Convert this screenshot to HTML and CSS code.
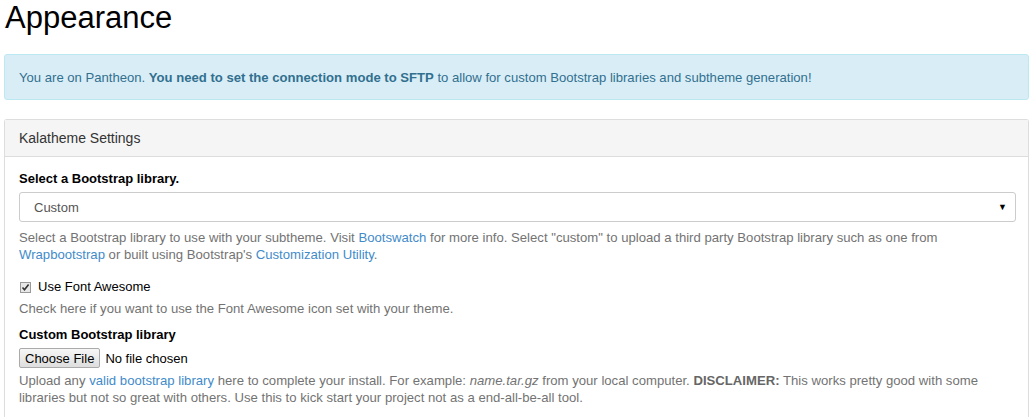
FILE: index.html
```html
<!DOCTYPE html>
<html>
<head>
<meta charset="utf-8">
<link rel="stylesheet" href="styles.css">
</head>
<body>
<h1 class="page-title">Appearance</h1>
<div class="alert">You are on Pantheon. <strong>You need to set the connection mode to SFTP</strong> to allow for custom Bootstrap libraries and subtheme generation!</div>
<div class="panel">
  <div class="panel-heading">Kalatheme Settings</div>
  <div class="panel-body">
    <div class="form-item">
      <label class="field-label">Select a Bootstrap library.</label>
      <div class="select">
        <span>Custom</span>
        <span class="caret">&#9660;</span>
      </div>
      <div class="help">Select a Bootstrap library to use with your subtheme. Visit <a href="#">Bootswatch</a> for more info. Select "custom" to upload a third party Bootstrap library such as one from <a href="#">Wrapbootstrap</a> or built using Bootstrap's <a href="#">Customization Utility</a>.</div>
    </div>
    <div class="form-item check-item">
      <label class="check-row"><span class="checkbox"><svg width="9" height="9" viewBox="0 0 9 9"><path d="M1.5 4.5 L3.5 6.8 L7.6 1.6" fill="none" stroke="#333" stroke-width="1.6"/></svg></span>Use Font Awesome</label>
      <div class="help">Check here if you want to use the Font Awesome icon set with your theme.</div>
    </div>
    <div class="form-item">
      <label class="field-label">Custom Bootstrap library</label>
      <div class="file-row"><span class="file-btn">Choose File</span><span class="file-none">No file chosen</span></div>
      <div class="help">Upload any <a href="#">valid bootstrap library</a> here to complete your install. For example: <em>name.tar.gz</em> from your local computer. <strong>DISCLAIMER:</strong> This works pretty good with some libraries but not so great with others. Use this to kick start your project not as a end-all-be-all tool.</div>
    </div>
  </div>
</div>
</body>
</html>
```
FILE: styles.css
```css
html, body {
  margin: 0;
  padding: 0;
  background: #fff;
}
body {
  padding: 0 3px 0 4px;
  font-family: "Liberation Sans", Arial, sans-serif;
  font-size: 13px;
  color: #333;
}
.page-title {
  margin: 0;
  padding: 0 0 0 1px;
  font-weight: normal;
  font-size: 31px;
  line-height: 36px;
  color: #000;
}
.alert {
  margin-top: 18px;
  background: #d9edf7;
  border: 1px solid #bce8f1;
  border-radius: 3px;
  color: #31708f;
  padding: 14px 14px 12px;
  line-height: 18px;
  font-size: 13.1px;
}
.alert strong { color: #31708f; }
.panel {
  margin-top: 19px;
  border: 1px solid #ddd;
  border-bottom: none;
  border-radius: 3px 3px 0 0;
  height: 300px;
}
.panel-heading {
  background: #f5f5f5;
  border-bottom: 1px solid #ddd;
  padding: 9px 14px;
  line-height: 18px;
  font-size: 14px;
  color: #333;
}
.panel-body {
  padding: 13px 12px 0 14px;
}
.field-label {
  display: block;
  font-weight: bold;
  color: #000;
  line-height: 18px;
  margin-bottom: 4px;
}
.select {
  display: flex;
  justify-content: space-between;
  align-items: center;
  height: 28px;
  border: 1px solid #ccc;
  border-radius: 3px;
  padding: 0 8px 0 14px;
  color: #555;
}
.caret {
  font-size: 9px;
  color: #000;
}
.help {
  color: #737373;
  line-height: 17px;
  margin-top: 7px;
  font-size: 13.15px;
}
.help a {
  color: #428bca;
  text-decoration: none;
}
.help strong { color: #666; }
.form-item { margin-bottom: 15px; }
.check-item { margin-bottom: 9px; }
.check-row {
  display: flex;
  align-items: center;
  color: #000;
  line-height: 18px;
}
.checkbox {
  display: inline-flex;
  align-items: center;
  justify-content: center;
  width: 9px;
  height: 9px;
  border: 1px solid #999;
  background: #e8e8e8;
  margin: 0 7px 0 1px;
}
.check-row + .help { margin-top: 4px; }
.file-row {
  display: flex;
  align-items: center;
  gap: 5px;
  color: #000;
}
.file-btn {
  display: inline-block;
  border: 1px solid #aaa;
  border-radius: 2px;
  background: linear-gradient(#f6f6f6, #dedede);
  padding: 1px 5px 0;
  line-height: 17px;
  color: #000;
}
.file-row + .help { margin-top: 4px; }
```
